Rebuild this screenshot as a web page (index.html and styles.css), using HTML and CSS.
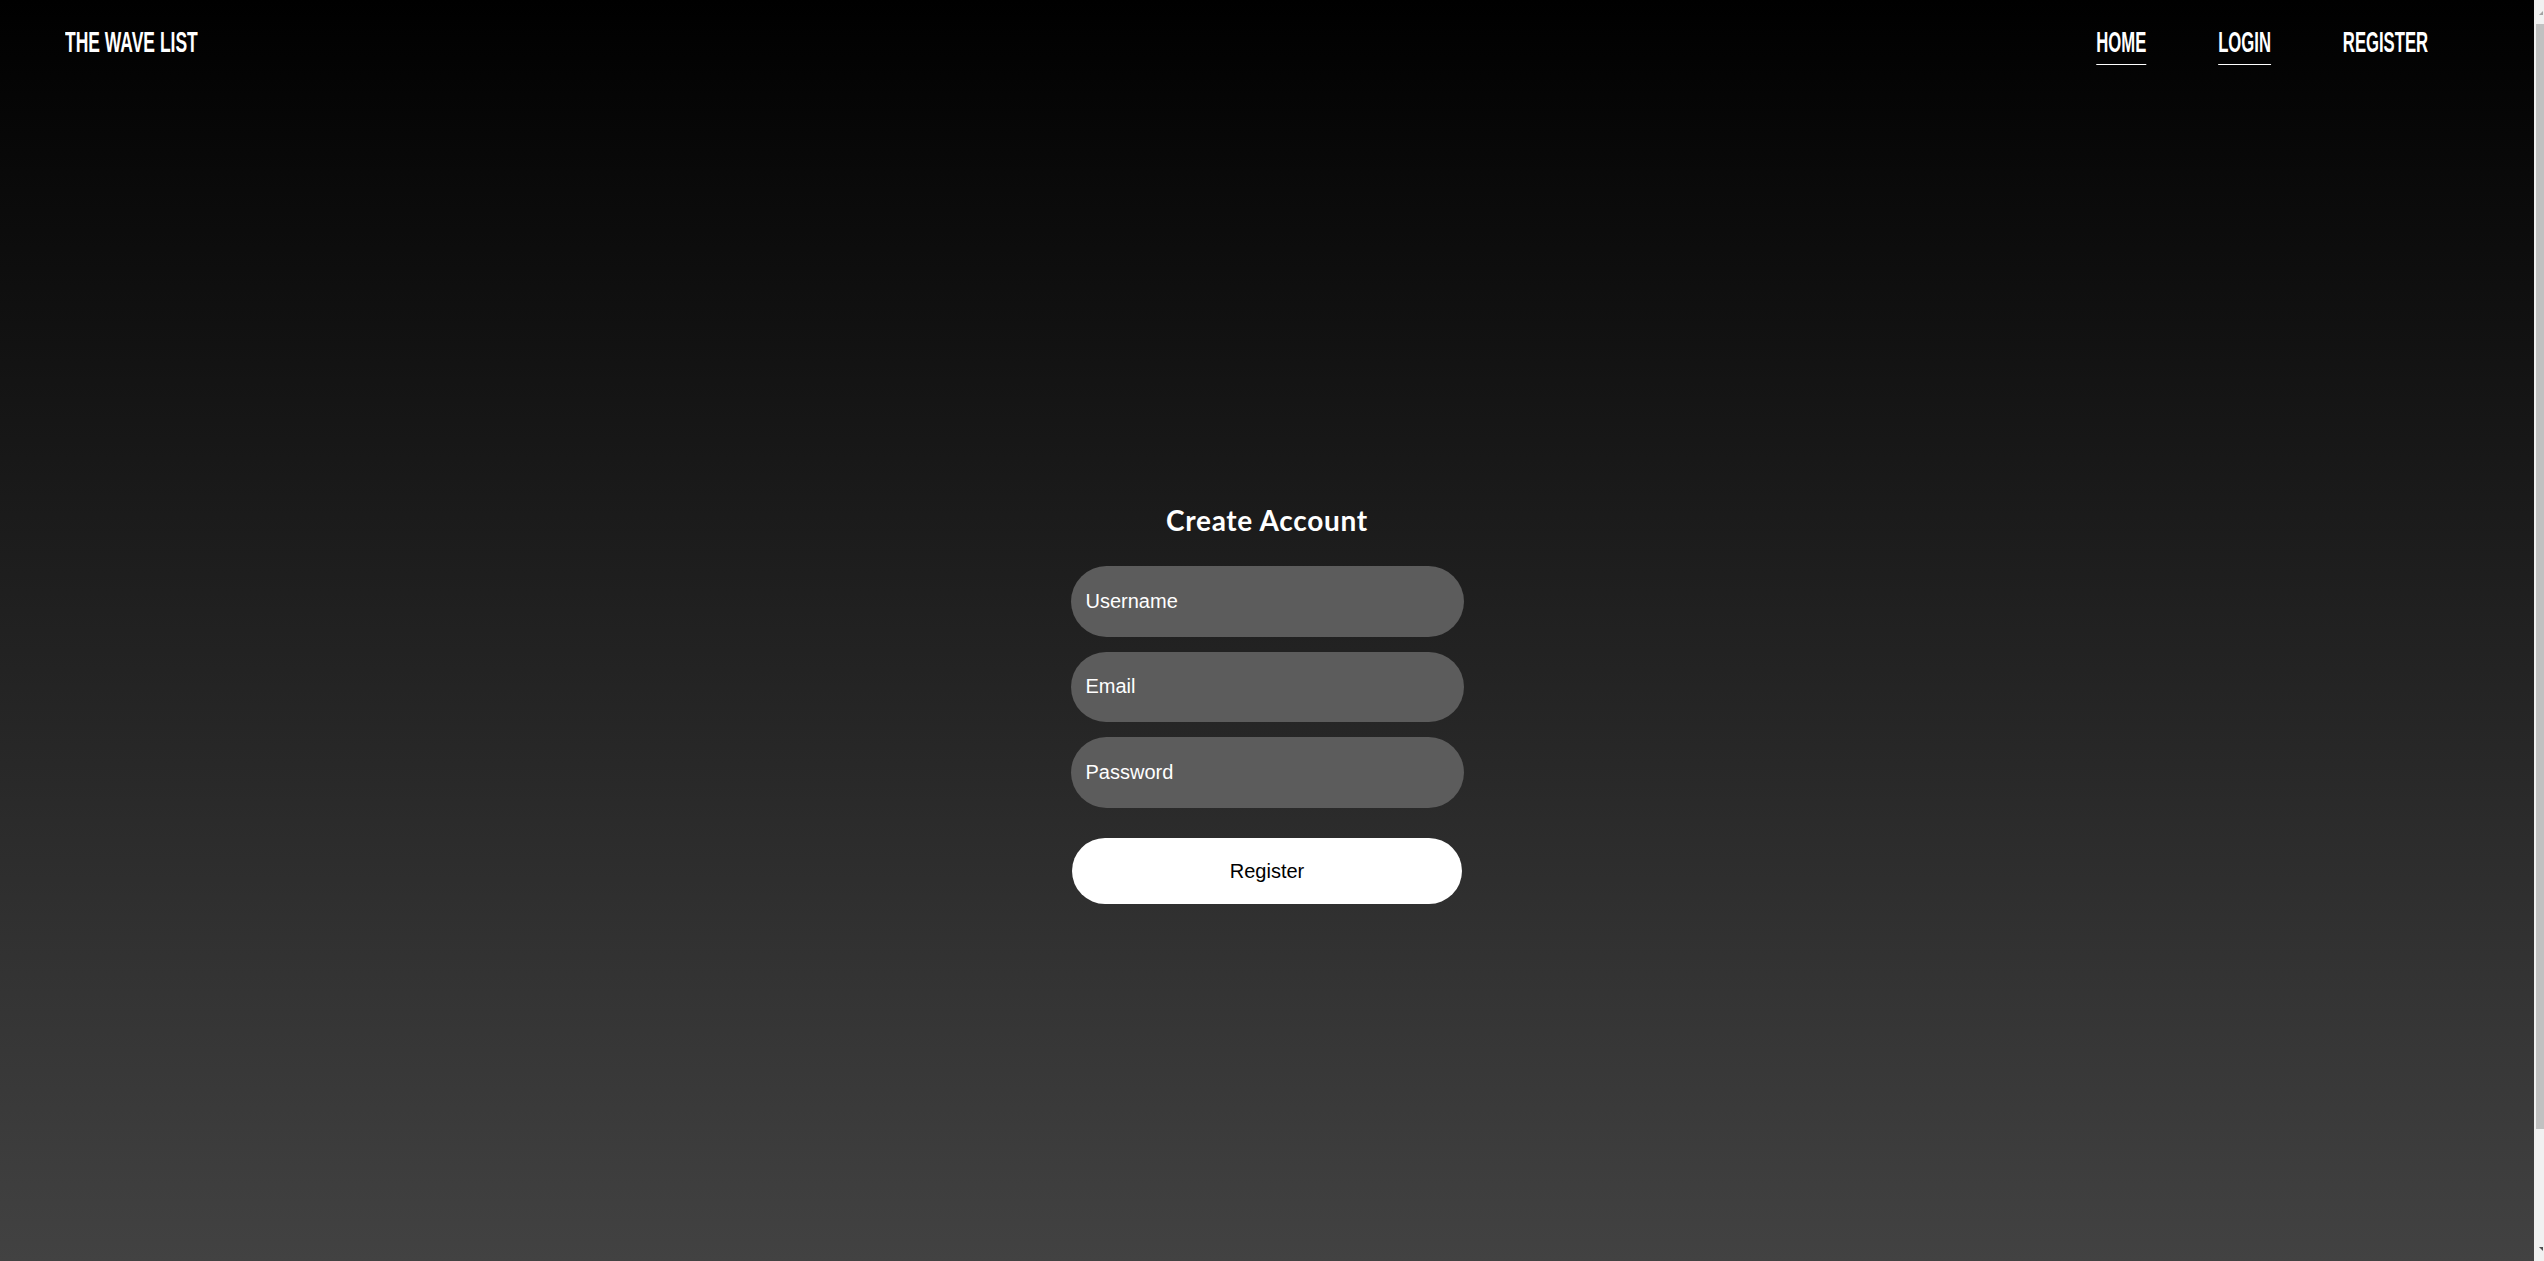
FILE: index.html
```html
<!DOCTYPE html>
<html lang="en">
<head>
<meta charset="utf-8">
<title>The Wave List - Register</title>
<link rel="stylesheet" href="styles.css">
</head>
<body>
  <header class="site-header">
    <a class="logo" href="#"><span class="logo-text">THE WAVE LIST</span></a>
    <nav class="nav">
      <ul class="nav-list">
        <li><a class="nav-link underlined" href="#">HOME</a></li>
        <li><a class="nav-link underlined" href="#">LOGIN</a></li>
        <li><a class="nav-link" href="#">REGISTER</a></li>
      </ul>
    </nav>
  </header>
  <main class="main">
    <form class="auth-form">
      <h2 class="form-title">Create Account</h2>
      <input class="field" type="text" placeholder="Username">
      <input class="field" type="email" placeholder="Email">
      <input class="field" type="password" placeholder="Password">
      <button class="submit" type="button">Register</button>
    </form>
  </main>
  <div class="scrollbar" aria-hidden="true">
    <span class="scroll-arrow scroll-arrow-up"></span>
    <span class="scroll-thumb"></span>
    <span class="scroll-arrow scroll-arrow-down"></span>
  </div>
</body>
</html>
```

FILE: styles.css
```css
* {
  box-sizing: border-box;
}

html, body {
  margin: 0;
  padding: 0;
}

body {
  min-height: 100vh;
  padding-right: 10px;
  background: linear-gradient(to bottom, #000000 0%, #424242 100%);
  color: #fff;
  font-family: "Liberation Sans", Arial, sans-serif;
}

.site-header {
  display: flex;
  justify-content: space-between;
  align-items: flex-start;
  height: 86px;
  padding: 28px 106px 0 65px;
}

.logo {
  display: block;
  color: #fff;
  text-decoration: none;
}

.logo-text {
  display: inline-block;
  font-family: "Liberation Sans", Arial, sans-serif;
  font-weight: 700;
  font-size: 29px;
  line-height: 29px;
  transform: scaleX(0.603);
  transform-origin: left center;
  white-space: nowrap;
}

.nav {
  transform: scaleX(0.575);
  transform-origin: right top;
}

.nav-list {
  display: flex;
  gap: 125px;
  list-style: none;
  margin: 0;
  padding: 0;
}

.nav-link {
  display: block;
  color: #fff;
  text-decoration: none;
  font-family: "Liberation Sans", Arial, sans-serif;
  font-weight: 700;
  font-size: 29px;
  line-height: 29px;
  padding-bottom: 7px;
  border-bottom: 1px solid transparent;
  white-space: nowrap;
}

.nav-link.underlined {
  border-bottom-color: #fff;
}

.main {
  display: flex;
  justify-content: center;
  padding-top: 417px;
  padding-bottom: 40px;
}

.auth-form {
  display: flex;
  flex-direction: column;
  align-items: center;
  width: 393px;
}

.form-title {
  margin: 0 0 29px;
  font-family: Lato, "Open Sans", sans-serif;
  font-weight: 700;
  font-size: 28px;
  line-height: 34px;
  letter-spacing: 0.7px;
  color: #fff;
}

.field {
  display: block;
  width: 393px;
  height: 70.5px;
  margin: 0 0 15px;
  padding: 0 15px;
  border: none;
  border-radius: 36px;
  background: #5c5c5c;
  color: #fff;
  font-family: "Liberation Sans", Arial, sans-serif;
  font-size: 20px;
  outline: none;
}

.field::placeholder {
  color: #fff;
  opacity: 1;
}

.submit {
  display: block;
  width: 390px;
  height: 66px;
  margin-top: 15.5px;
  border: none;
  border-radius: 33px;
  background: #fff;
  color: #000;
  font-family: "Liberation Sans", Arial, sans-serif;
  font-size: 20px;
  cursor: pointer;
}

/* imitation of the browser's scrollbar seen in the reference */
.scrollbar {
  position: fixed;
  top: 0;
  right: 0;
  width: 10px;
  height: 100vh;
  background: #f1f1f1;
}

.scroll-thumb {
  position: absolute;
  top: 24px;
  left: 2px;
  right: 0;
  height: 1105px;
  background: #c1c1c1;
}

.scroll-arrow {
  position: absolute;
  right: 1px;
  width: 0;
  height: 0;
  border-left: 4px solid transparent;
}

.scroll-arrow-up {
  top: 11px;
  border-bottom: 4px solid #a3a3a3;
}

.scroll-arrow-down {
  bottom: 10px;
  border-top: 4px solid #505050;
}
```
